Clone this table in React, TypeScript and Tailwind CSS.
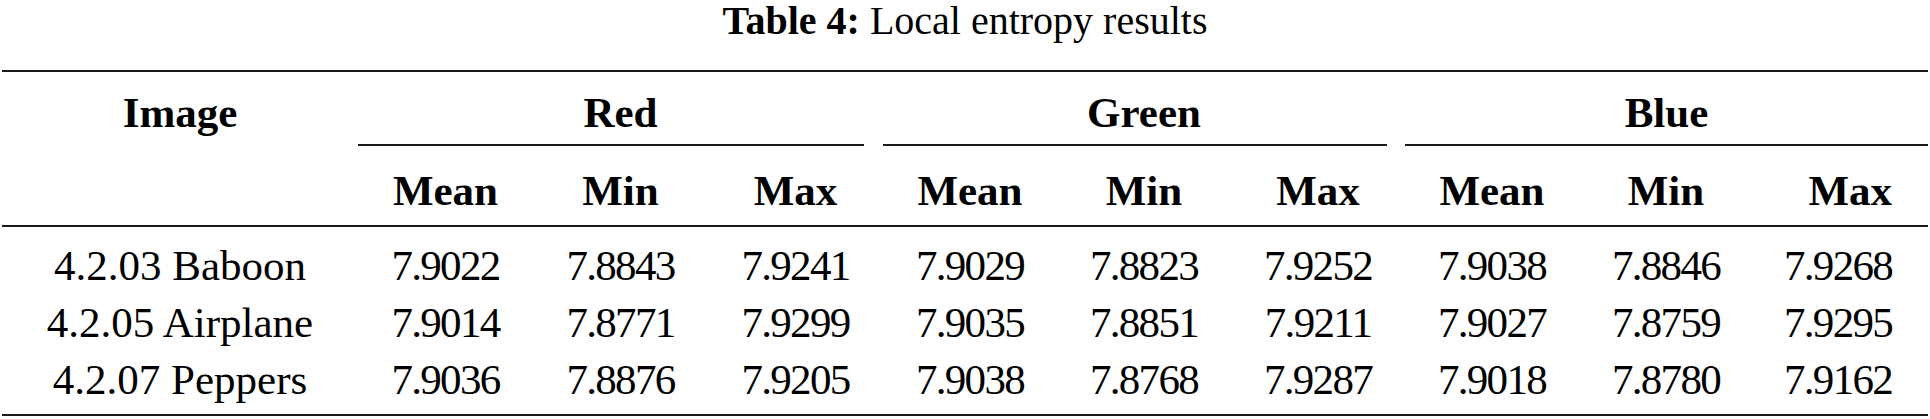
const rows = [
  {
    name: "4.2.03 Baboon",
    values: ["7.9022", "7.8843", "7.9241", "7.9029", "7.8823", "7.9252", "7.9038", "7.8846", "7.9268"],
  },
  {
    name: "4.2.05 Airplane",
    values: ["7.9014", "7.8771", "7.9299", "7.9035", "7.8851", "7.9211", "7.9027", "7.8759", "7.9295"],
  },
  {
    name: "4.2.07 Peppers",
    values: ["7.9036", "7.8876", "7.9205", "7.9038", "7.8768", "7.9287", "7.9018", "7.8780", "7.9162"],
  },
];

const groups = [
  { label: "Red", span: "col-span-3", rule: "mr-[19px]" },
  { label: "Green", span: "col-span-3", rule: "mr-[18px]" },
  { label: "Blue", span: "col-span-3", rule: "" },
];

const grid =
  "grid grid-cols-[356px_175px_175px_175px_174px_174px_174px_174px_174px_175px]";

const Rule = ({ className = "" }: { className?: string }) => (
  <div className={`h-[2px] bg-[#1a1a1a] ${className}`} />
);

const App = () => {
  return (
    <div className="w-[1930px] h-[419px] bg-white text-black font-['Liberation_Serif',serif]">
      <p className="h-[39px] pt-[1px] text-center text-[40px] leading-[39px]">
        <span className="font-bold">Table 4:</span> Local entropy results
      </p>

      <div className="ml-[2px] mt-[31px] w-[1926px]">
        <Rule />

        {/* group header */}
        <div className={`${grid} text-[43px] font-bold`}>
          <div className="pt-[18px] text-center leading-[46px]">Image</div>
          {groups.map((g) => (
            <div key={g.label} className={g.span}>
              <div className="pt-[18px] text-center leading-[46px]">{g.label}</div>
              <Rule className={`mt-[8px] ${g.rule}`} />
            </div>
          ))}
        </div>

        {/* sub header */}
        <div className={`${grid} pt-[22px] pb-[11px] text-[43px] font-bold leading-[46px]`}>
          <div />
          {groups.map((g) =>
            ["Mean", "Min", "Max"].map((s, i) => (
              <div
                key={g.label + s}
                className={
                  g.label === "Blue" && i === 2 ? "pr-[36px] text-right" : "text-center"
                }
              >
                {s}
              </div>
            ))
          )}
        </div>

        <Rule />

        <div className="pt-[10px] pb-[6px] text-[43px] leading-[57px]">
          {rows.map((r) => (
            <div key={r.name} className={grid}>
              <div className="text-center">{r.name}</div>
              {r.values.map((v, i) => (
                <div
                  key={i}
                  className={`tracking-[-0.04em] ${
                    i === 8 ? "pr-[36px] text-right" : "text-center"
                  }`}
                >
                  {v}
                </div>
              ))}
            </div>
          ))}
        </div>

        <Rule />
      </div>
    </div>
  );
};

export default App;
